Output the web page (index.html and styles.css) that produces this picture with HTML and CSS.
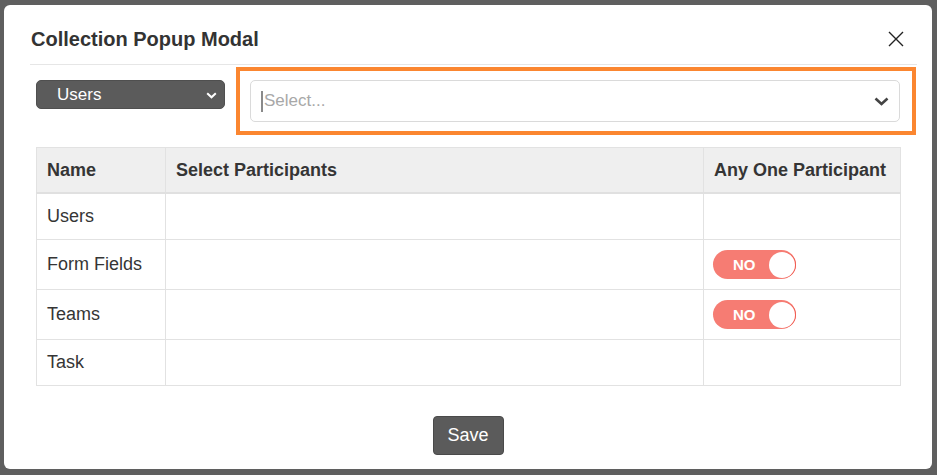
FILE: index.html
```html
<!DOCTYPE html>
<html lang="en">
<head>
  <meta charset="UTF-8">
  <meta name="viewport" content="width=device-width, initial-scale=1.0">
  <title>Collection Popup Modal</title>
  <link rel="stylesheet" href="styles.css">
</head>
<body>
  <div class="modal">
    <div class="modal-header">
      <h2 class="modal-title">Collection Popup Modal</h2>
      <button class="close-btn" aria-label="Close">
        <svg width="16" height="16" viewBox="0 0 16 16"><path d="M1 1 L15 15 M15 1 L1 15" stroke="#222" stroke-width="1.4" fill="none"/></svg>
      </button>
    </div>

    <div class="modal-body">
      <div class="filter-row">
        <div class="type-select">
          <span>Users</span>
          <svg width="11" height="7" viewBox="0 0 11 7"><path d="M1.2 1.2 L5.5 5.3 L9.8 1.2" stroke="#fff" stroke-width="2" fill="none"/></svg>
        </div>
        <div class="highlight-box">
          <div class="participant-select">
            <span class="caret"></span>
            <span class="placeholder">Select...</span>
            <svg class="select-arrow" width="15" height="9" viewBox="0 0 15 9"><path d="M1.5 1.5 L7.5 7 L13.5 1.5" stroke="#444" stroke-width="2.6" fill="none"/></svg>
          </div>
        </div>
      </div>

      <table class="participants-table">
        <colgroup>
          <col class="col-name">
          <col class="col-select">
          <col class="col-any">
        </colgroup>
        <thead>
          <tr>
            <th>Name</th>
            <th>Select Participants</th>
            <th>Any One Participant</th>
          </tr>
        </thead>
        <tbody>
          <tr>
            <td>Users</td>
            <td></td>
            <td></td>
          </tr>
          <tr>
            <td class="toggle-row">Form Fields</td>
            <td class="toggle-row"></td>
            <td class="toggle-row"><span class="toggle"><span class="toggle-label">NO</span><span class="toggle-knob"></span></span></td>
          </tr>
          <tr>
            <td class="toggle-row">Teams</td>
            <td class="toggle-row"></td>
            <td class="toggle-row"><span class="toggle"><span class="toggle-label">NO</span><span class="toggle-knob"></span></span></td>
          </tr>
          <tr>
            <td>Task</td>
            <td></td>
            <td></td>
          </tr>
        </tbody>
      </table>
    </div>

    <div class="modal-footer">
      <button class="save-btn">Save</button>
    </div>
  </div>
</body>
</html>
```

FILE: styles.css
```css
:root {
  --overlay-color: #5f5f5f;
  --text-color: #333;
  --border-color: #e2e2e2;
  --dark-btn: #5b5b5b;
  --orange: #fb8630;
  --toggle-off: #f67c73;
}

body {
  margin: 0;
  padding: 5px 0 0 4px;
  height: 470px;
  overflow: hidden;
  background: var(--overlay-color);
  font-family: 'Liberation Sans', Arial, sans-serif;
  color: var(--text-color);
}

.modal {
  width: 928px;
  height: 464px;
  background: #fff;
  border-radius: 6px;
  box-sizing: border-box;
}

.modal-header {
  margin: 0 15px 0 26px;
  padding: 22px 0 13px 1px;
  border-bottom: 1px solid #e6e6e6;
  display: flex;
  justify-content: space-between;
  align-items: center;
}

.modal-title {
  margin: 0;
  font-size: 20px;
  line-height: 24px;
  font-weight: bold;
  color: #333;
}

.close-btn {
  margin-right: 13px;
  padding: 0;
  border: none;
  background: none;
  width: 16px;
  height: 16px;
  display: flex;
  cursor: pointer;
}

.modal-body {
  padding: 0 32px;
}

.filter-row {
  margin-top: 2px;
  display: flex;
  align-items: flex-start;
  gap: 11px;
}

.type-select {
  margin-top: 13px;
  width: 189px;
  height: 29px;
  box-sizing: border-box;
  padding: 1px 7px 0 20px;
  background: var(--dark-btn);
  border: 1px solid #4f4f4f;
  border-radius: 5px;
  color: #fff;
  font-size: 17px;
  display: flex;
  justify-content: space-between;
  align-items: center;
}

.highlight-box {
  flex: 1;
  margin-right: -16px;
  border: 4px solid var(--orange);
  padding: 9px 12px 9px 10px;
}

.participant-select {
  height: 42px;
  box-sizing: border-box;
  border: 1px solid #dadada;
  border-radius: 5px;
  padding: 0 10px 0 10px;
  display: flex;
  align-items: center;
}

.caret {
  width: 2px;
  height: 21px;
  background: #8a8a8a;
  margin-right: 1px;
}

.placeholder {
  flex: 1;
  font-size: 17px;
  color: #a8a8a8;
}

.participants-table {
  margin-top: 12px;
  width: 864px;
  border-collapse: collapse;
  table-layout: fixed;
  font-size: 18px;
  color: #353535;
}

.col-name { width: 129px; }
.col-select { width: 538px; }
.col-any { width: 197px; }

.participants-table th,
.participants-table td {
  border: 1px solid var(--border-color);
  padding: 12px 10px;
  line-height: 21px;
  height: 21px;
  text-align: left;
  vertical-align: middle;
}

.participants-table th {
  background: #efefef;
  font-weight: bold;
  padding-bottom: 11px;
  border-bottom: 2px solid #e0e0e0;
}

.participants-table td.toggle-row {
  padding-top: 10px;
  padding-bottom: 10px;
  height: 29px;
}

.toggle {
  width: 83px;
  height: 29px;
  border-radius: 15px;
  background: var(--toggle-off);
  display: flex;
  align-items: center;
  justify-content: space-between;
  padding: 0 1px 0 20px;
  box-sizing: border-box;
  margin-left: -1px;
}

.toggle-label {
  color: #fff;
  font-size: 15px;
  font-weight: bold;
  line-height: 15px;
}

.toggle-knob {
  width: 26px;
  height: 26px;
  border-radius: 50%;
  background: #fff;
  box-shadow: 1px 0 0 #f05a50;
}

.modal-footer {
  margin-top: 30px;
  text-align: center;
}

.save-btn {
  width: 71px;
  height: 39px;
  background: var(--dark-btn);
  border: 1px solid #4a4a4a;
  border-radius: 4px;
  color: #fff;
  font-family: 'Liberation Sans', Arial, sans-serif;
  font-size: 18px;
  cursor: pointer;
}
```
